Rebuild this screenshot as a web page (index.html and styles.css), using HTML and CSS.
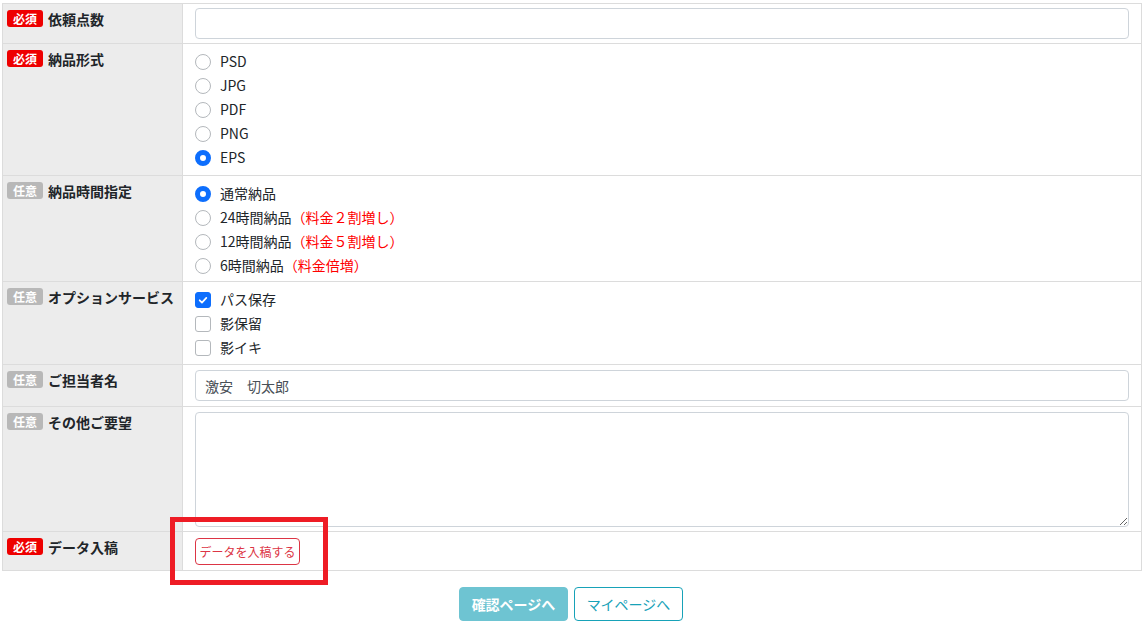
FILE: index.html
```html
<!DOCTYPE html>
<html lang="ja">
<head>
<meta charset="utf-8">
<link rel="stylesheet" href="styles.css">
</head>
<body>
<div class="page">
  <table class="form">
    <tr>
      <th><span class="badge req">必須</span>依頼点数</th>
      <td class="field"><input class="ctl" type="text"></td>
    </tr>
    <tr>
      <th><span class="badge req">必須</span>納品形式</th>
      <td class="choices">
        <div class="opt"><span class="radio"></span>PSD</div>
        <div class="opt"><span class="radio"></span>JPG</div>
        <div class="opt"><span class="radio"></span>PDF</div>
        <div class="opt"><span class="radio"></span>PNG</div>
        <div class="opt"><span class="radio on"></span>EPS</div>
      </td>
    </tr>
    <tr>
      <th><span class="badge opt-b">任意</span>納品時間指定</th>
      <td class="choices tight">
        <div class="opt"><span class="radio on"></span>通常納品</div>
        <div class="opt"><span class="radio"></span>24時間納品<span class="note">（料金２割増し）</span></div>
        <div class="opt"><span class="radio"></span>12時間納品<span class="note">（料金５割増し）</span></div>
        <div class="opt"><span class="radio"></span>6時間納品<span class="note">（料金倍増）</span></div>
      </td>
    </tr>
    <tr>
      <th><span class="badge opt-b">任意</span>オプションサービス</th>
      <td class="choices snug">
        <div class="opt"><span class="check on"><svg viewBox="0 0 16 16" width="16" height="16"><path d="M4.2 8.3l2.6 2.6 5-5.4" fill="none" stroke="#fff" stroke-width="2" stroke-linecap="round" stroke-linejoin="round"/></svg></span>パス保存</div>
        <div class="opt"><span class="check"></span>影保留</div>
        <div class="opt"><span class="check"></span>影イキ</div>
      </td>
    </tr>
    <tr>
      <th><span class="badge opt-b">任意</span>ご担当者名</th>
      <td class="field roomy"><input class="ctl" type="text" value="激安　切太郎"></td>
    </tr>
    <tr>
      <th><span class="badge opt-b">任意</span>その他ご要望</th>
      <td class="field"><textarea class="ctl area"></textarea></td>
    </tr>
    <tr>
      <th><span class="badge req">必須</span>データ入稿</th>
      <td class="field upload-cell"><button class="upload" type="button">データを入稿する</button></td>
    </tr>
  </table>
  <div class="actions">
    <button class="btn primary" type="button">確認ページへ</button>
    <button class="btn outline" type="button">マイページへ</button>
  </div>
  <div class="highlight"></div>
</div>
</body>
</html>
```
FILE: styles.css
```css
* { box-sizing: border-box; }
html, body { margin: 0; padding: 0; background: #fff; }
body {
  font-family: "Noto Sans CJK JP", "Noto Sans", sans-serif;
  font-size: 14px;
  color: #212529;
}
.page {
  position: relative;
  padding: 3px 1px 0 2px;
  width: 1143px;
  height: 631px;
}
.form {
  width: 1140px;
  border-collapse: collapse;
  border: 1px solid #dcdcdc;
}
.form th, .form td {
  border: 1px solid #dcdcdc;
  vertical-align: top;
  text-align: left;
}
.form th {
  width: 180px;
  background: #ececec;
  padding: 3px 4px;
  line-height: 24px;
  font-weight: bold;
  white-space: nowrap;
}
.form td {
  line-height: 24px;
}
.form td.field { padding: 4px 12px; }
.form td.field.roomy { padding: 5px 12px; }
.form td.field.upload-cell { padding: 5px 12px 4px; }
.form td.choices { padding: 5px 12px 6px; }
.form td.choices.tight { padding-bottom: 4px; }
.form td.choices.snug { padding-bottom: 5px; }
.badge {
  display: inline-block;
  width: 36px;
  height: 17px;
  line-height: 17px;
  border-radius: 3px;
  color: #fff;
  font-size: 12px;
  font-weight: bold;
  text-align: center;
  margin-right: 5px;
  vertical-align: 1px;
}
.badge.req { background: #ee0000; }
.badge.opt-b { background: #b8b8b8; }
.ctl {
  display: block;
  width: 100%;
  border: 1px solid #ced4da;
  border-radius: 4px;
  font-family: inherit;
  font-size: 14px;
  color: #495057;
  background: #fff;
  outline: none;
}
input.ctl { height: 31px; padding: 0 9px; }
.area { height: 115px; resize: vertical; padding: 6px 9px; margin-top: 1px; }
.opt {
  display: flex;
  align-items: center;
  height: 24px;
  color: #212529;
}
.note { color: #ff0000; }
.radio, .check {
  width: 16px;
  height: 16px;
  flex: none;
  margin-right: 9px;
  border: 1px solid #b4b8bc;
  background: #fff;
  margin-top: 2px;
}
.radio { border-radius: 50%; }
.radio.on {
  border: 5px solid #0d6efd;
  background: #fff;
}
.check { border-radius: 3px; display: flex; align-items: center; justify-content: center; }
.check.on { background: #0d6efd; border-color: #0d6efd; }
.check svg { display: block; }
.upload {
  display: block;
  margin: 1px 0 1px;
  height: 27px;
  width: 105px;
  padding: 0;
  border: 1px solid #dc3545;
  border-radius: 4px;
  background: #fff;
  color: #dc3545;
  font-family: inherit;
  font-size: 12px;
  line-height: 25px;
}
.actions {
  display: flex;
  justify-content: center;
  gap: 6px;
  margin: 16px 0 0 -2px;
}
.btn {
  width: 109px;
  height: 34px;
  border-radius: 4px;
  font-family: inherit;
  font-size: 14px;
  padding: 0;
}
.btn.primary {
  background: #6ec4d2;
  border: 1px solid #6ec4d2;
  color: #fff;
  font-weight: bold;
}
.btn.outline {
  background: #fff;
  border: 1px solid #17a2b8;
  color: #17a2b8;
}
.highlight {
  position: absolute;
  left: 170px;
  top: 517px;
  width: 158px;
  height: 68px;
  border: 5px solid #ee1c25;
}
```
